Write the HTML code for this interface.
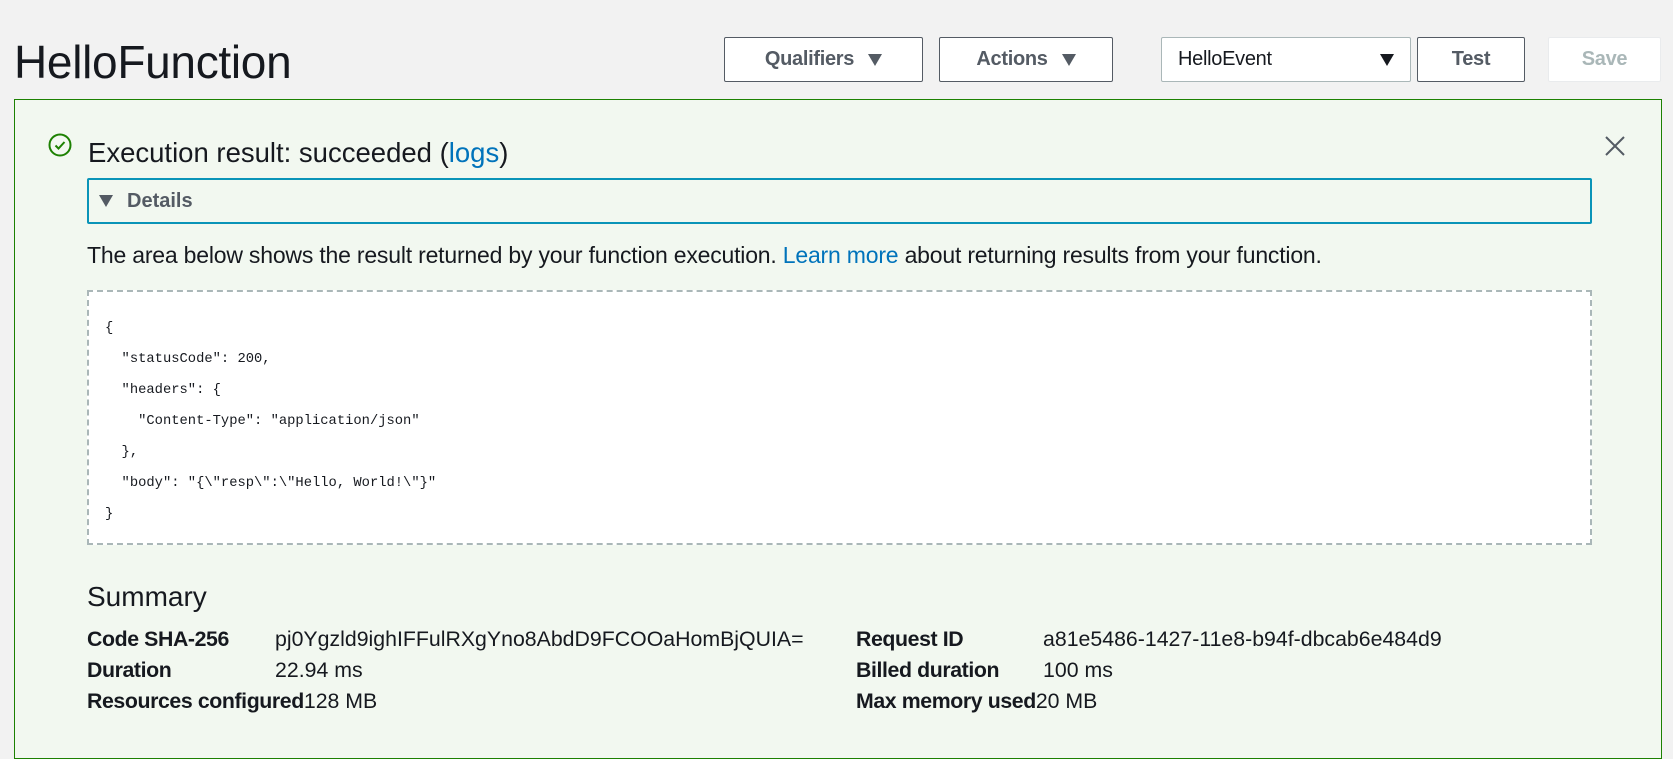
<!DOCTYPE html>
<html><head><meta charset="utf-8">
<style>
*{margin:0;padding:0;box-sizing:border-box}
body{width:1673px;height:739px;overflow:hidden;background:#f2f2f2;font-family:"Liberation Sans",sans-serif;color:#16191f;position:relative}
.a{position:absolute}
.btn{position:absolute;top:37px;height:45px;border:1px solid #545b64;background:#fff;border-radius:2px;font-weight:bold;font-size:20px;color:#545b64;display:flex;align-items:center;justify-content:center;letter-spacing:-0.3px}
.tri{display:inline-block;width:0;height:0;border-left:7px solid transparent;border-right:7px solid transparent;border-top:12px solid #545b64;margin-left:14px}
.panel{position:absolute;left:14px;top:99px;width:1648px;height:660px;border:1px solid #1d8102;background:#f2f8f0}
.row{position:absolute;font-size:21.3px;white-space:nowrap}
.row b{letter-spacing:-0.4px}
code{font-family:"Liberation Mono",monospace;font-size:13.8px;color:#16191f;position:absolute;white-space:pre;line-height:31px}
</style></head><body>
<div class="a" style="left:14px;top:35px;font-size:46px;letter-spacing:-0.3px">HelloFunction</div>
<div class="btn" style="left:724px;width:199px">Qualifiers<span class="tri"></span></div>
<div class="btn" style="left:939px;width:174px">Actions<span class="tri"></span></div>
<div class="btn" style="left:1161px;width:250px;justify-content:flex-start;padding-left:16px;font-weight:normal;color:#16191f;border-color:#aab7b8">HelloEvent<span class="tri" style="margin-left:auto;margin-right:16px;border-top-color:#16191f"></span></div>
<div class="btn" style="left:1417px;width:108px">Test</div>
<div class="btn" style="left:1548px;width:113px;border-color:#e9ebed;color:#aab7b8">Save</div>
<div class="panel">
 <svg class="a" style="left:32px;top:32px" width="26" height="26" viewBox="0 0 26 26"><circle cx="13" cy="13" r="10.5" fill="none" stroke="#1d8102" stroke-width="2"/><path d="M8.5 13.5l3 3 6-6.5" fill="none" stroke="#1d8102" stroke-width="2"/></svg>
 <div class="a" style="left:73px;top:37px;font-size:27.5px">Execution result: succeeded (<span style="color:#0073bb">logs</span>)</div>
 <svg class="a" style="left:1589px;top:35px" width="22" height="22" viewBox="0 0 22 22"><path d="M2 2L20 20M20 2L2 20" stroke="#545b64" stroke-width="2"/></svg>
 <div class="a" style="left:72px;top:78px;width:1505px;height:46px;border:2px solid #0a94b8;border-radius:2px;font-weight:bold;font-size:20px;color:#545b64;padding:10px 0 0 10px;display:flex;align-items:flex-start"><span style="display:inline-block;width:0;height:0;border-left:7px solid transparent;border-right:7px solid transparent;border-top:12px solid #545b64;margin:5px 14px 0 0"></span>Details</div>
 <div class="a" style="left:72px;top:142px;font-size:23px;letter-spacing:-0.2px;white-space:nowrap">The area below shows the result returned by your function execution. <span style="color:#0073bb">Learn more</span> about returning results from your function.</div>
 <div class="a" style="left:72px;top:190px;width:1505px;height:255px;border:2px dashed #aab7b8;background:#fff">
  <code style="left:16px;top:21px">{
  "statusCode": 200,
  "headers": {
    "Content-Type": "application/json"
  },
  "body": "{\"resp\":\"Hello, World!\"}"
}</code>
 </div>
 <div class="a" style="left:72px;top:481px;font-size:28px">Summary</div>
 <div class="row" style="left:72px;top:527px"><b>Code SHA-256</b></div>
 <div class="row" style="left:260px;top:527px">pj0Ygzld9ighIFFulRXgYno8AbdD9FCOOaHomBjQUIA=</div>
 <div class="row" style="left:72px;top:558px"><b>Duration</b></div>
 <div class="row" style="left:260px;top:558px">22.94 ms</div>
 <div class="row" style="left:72px;top:589px"><b>Resources configured</b>128 MB</div>
 <div class="row" style="left:841px;top:527px"><b>Request ID</b></div>
 <div class="row" style="left:1028px;top:527px">a81e5486-1427-11e8-b94f-dbcab6e484d9</div>
 <div class="row" style="left:841px;top:558px"><b>Billed duration</b></div>
 <div class="row" style="left:1028px;top:558px">100 ms</div>
 <div class="row" style="left:841px;top:589px"><b>Max memory used</b>20 MB</div>
</div>
</body></html>
